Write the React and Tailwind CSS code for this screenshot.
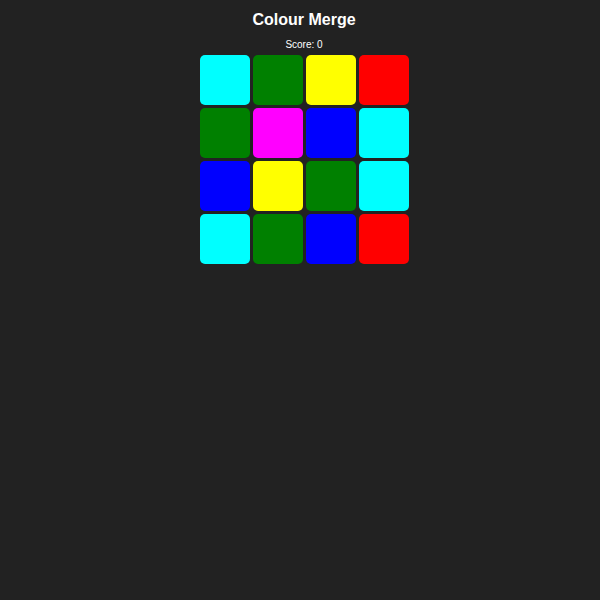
import React from 'react';

const tiles = [
  '#00ffff', '#008000', '#ffff00', '#ff0000',
  '#008000', '#ff00ff', '#0000ff', '#00ffff',
  '#0000ff', '#ffff00', '#008000', '#00ffff',
  '#00ffff', '#008000', '#0000ff', '#ff0000',
];

const App = () => {
  return (
    <div className="min-h-[600px] w-full bg-[#222222] pl-2 font-['Liberation_Sans',Arial,sans-serif] text-white">
      <div className="flex flex-col items-center">
        <h1 className="mt-[11px] text-[16px] leading-[18px] font-bold">Colour Merge</h1>
        <div className="mt-[10px] text-[10px] leading-[12px]">Score: 0</div>
        <div className="mt-[4px] grid grid-cols-[repeat(4,50px)] gap-[3px]">
          {tiles.map((c, i) => (
            <div key={i} className="h-[50px] w-[50px] rounded-[5px]" style={{ backgroundColor: c }} />
          ))}
        </div>
      </div>
    </div>
  );
};

export default App;
